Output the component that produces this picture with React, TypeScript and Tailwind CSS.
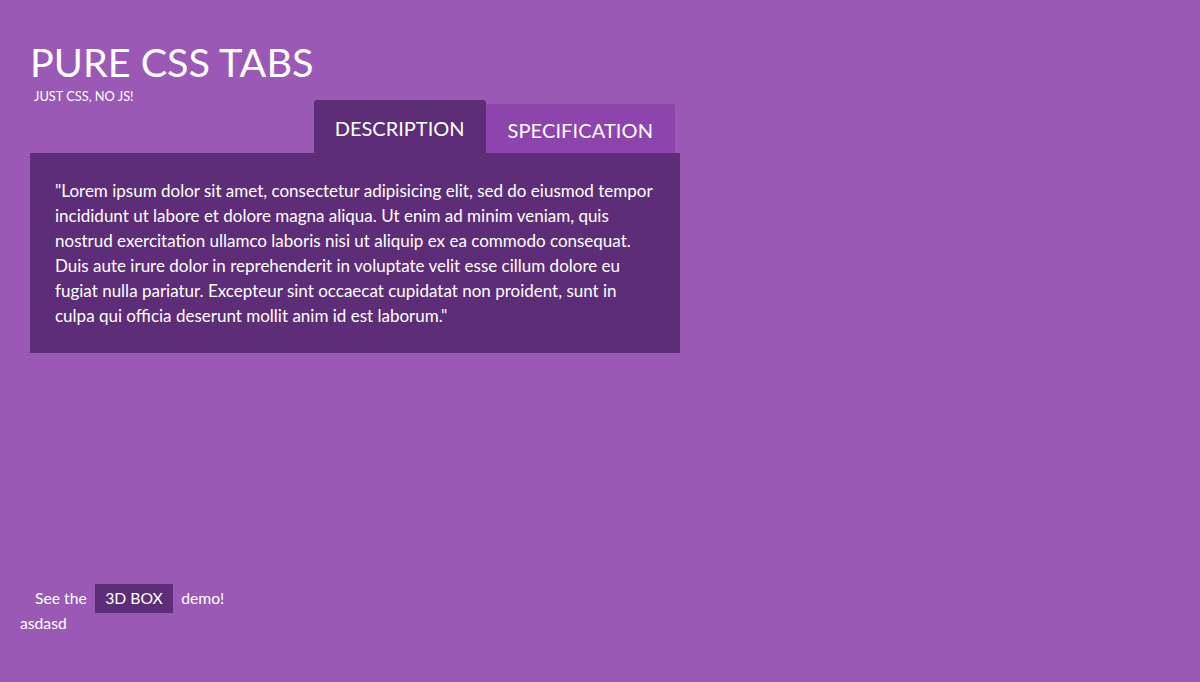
export default function App() {
  return (
    <div
      className="min-h-screen bg-[#9b59b6] text-white"
      style={{ fontFamily: 'Lato, "Open Sans", sans-serif' }}
    >
      <div className="px-[30px] pt-[42px]">
        <h1 className="text-[39.6px] leading-[40px] font-normal">PURE CSS TABS</h1>
        <p className="mt-[9px] pl-[4px] text-[12.8px] leading-[10px] uppercase">Just CSS, no JS!</p>

        <div className="mt-[-1px] w-[650px]">
          <div className="flex items-end justify-end pr-[5px]">
            <button className="h-[53px] rounded-t-[3px] bg-[#5e2d77] px-[21px] pt-[4px] text-[20px] leading-[49px] uppercase">
              Description
            </button>
            <button className="h-[49px] rounded-t-[3px] bg-[#8e44ad] px-[22px] pt-[3px] text-[20px] leading-[46px] tracking-[0.1px] uppercase">
              Specification
            </button>
          </div>
          <div className="bg-[#5e2d77] px-[25px] py-[25px] text-[17px] leading-[25px]">
            "Lorem ipsum dolor sit amet, consectetur adipisicing elit, sed do eiusmod tempor
            incididunt ut labore et dolore magna aliqua. Ut enim ad minim veniam, quis nostrud
            exercitation ullamco laboris nisi ut aliquip ex ea commodo consequat. Duis aute irure
            dolor in reprehenderit in voluptate velit esse cillum dolore eu fugiat nulla pariatur.
            Excepteur sint occaecat cupidatat non proident, sunt in culpa qui officia deserunt
            mollit anim id est laborum."
          </div>
        </div>
      </div>

      <div className="mt-[231px] flex h-[29px] items-center pl-[35px] text-[15.7px]">
        <span>See the</span>
        <a className="mx-[8.5px] bg-[#5e2d77] px-[10px] leading-[29px]">3D BOX</a>
        <span>demo!</span>
      </div>
      <p className="pl-[20px] text-[15.7px] leading-[20px]">asdasd</p>
    </div>
  )
}
